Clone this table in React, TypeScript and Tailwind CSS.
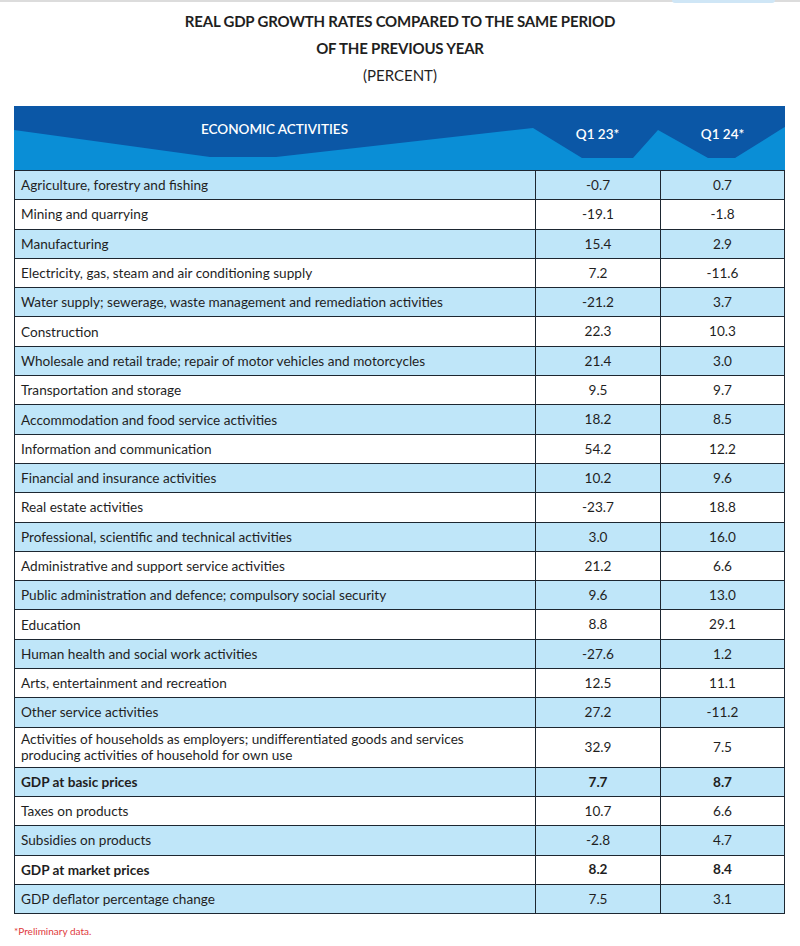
import * as React from "react"

type Row = { label: string; a: string; b: string; bold?: boolean; tall?: boolean }

const rows: Row[] = [
  { label: "Agriculture, forestry and fishing", a: "-0.7", b: "0.7" },
  { label: "Mining and quarrying", a: "-19.1", b: "-1.8" },
  { label: "Manufacturing", a: "15.4", b: "2.9" },
  { label: "Electricity, gas, steam and air conditioning supply", a: "7.2", b: "-11.6" },
  { label: "Water supply; sewerage, waste management and remediation activities", a: "-21.2", b: "3.7" },
  { label: "Construction", a: "22.3", b: "10.3" },
  { label: "Wholesale and retail trade; repair of motor vehicles and motorcycles", a: "21.4", b: "3.0" },
  { label: "Transportation and storage", a: "9.5", b: "9.7" },
  { label: "Accommodation and food service activities", a: "18.2", b: "8.5" },
  { label: "Information and communication", a: "54.2", b: "12.2" },
  { label: "Financial and insurance activities", a: "10.2", b: "9.6" },
  { label: "Real estate activities", a: "-23.7", b: "18.8" },
  { label: "Professional, scientific and technical activities", a: "3.0", b: "16.0" },
  { label: "Administrative and support service activities", a: "21.2", b: "6.6" },
  { label: "Public administration and defence; compulsory social security", a: "9.6", b: "13.0" },
  { label: "Education", a: "8.8", b: "29.1" },
  { label: "Human health and social work activities", a: "-27.6", b: "1.2" },
  { label: "Arts, entertainment and recreation", a: "12.5", b: "11.1" },
  { label: "Other service activities", a: "27.2", b: "-11.2" },
  {
    label: "Activities of households as employers; undifferentiated goods and services producing activities of household for own use",
    a: "32.9",
    b: "7.5",
    tall: true,
  },
  { label: "GDP at basic prices", a: "7.7", b: "8.7", bold: true },
  { label: "Taxes on products", a: "10.7", b: "6.6" },
  { label: "Subsidies on products", a: "-2.8", b: "4.7" },
  { label: "GDP at market prices", a: "8.2", b: "8.4", bold: true },
  { label: "GDP deflator percentage change", a: "7.5", b: "3.1" },
]

const HeaderShape = () => (
  <svg className="absolute inset-0 h-full w-full" viewBox="0 0 771 64" preserveAspectRatio="none">
    <rect x="0" y="0" width="771" height="64" fill="#0b57a6" />
    <polygon
      fill="#0a8ed6"
      points="0,24 196,51 262,51 519,22 568,52 619,52 644,24 694,52 721,52 769,22 771,21 771,64 0,64"
    />
  </svg>
)

export default function App() {
  return (
    <div className="min-h-[946px] w-[800px] bg-white text-[#1f1f1f]" style={{ fontFamily: "Lato, 'Liberation Sans', sans-serif" }}>
      <div className="relative h-[2px] bg-[#dcdcdc]">
        <div className="absolute right-[25px] top-0 h-[3px] w-[103px] rounded-b bg-[#cfe6f6]" />
      </div>

      <div className="flex flex-col items-center pt-[6px] text-center">
        <h1 className="text-[15px] font-bold leading-[27px] tracking-[-0.2px]">
          REAL GDP GROWTH RATES COMPARED TO THE SAME PERIOD
        </h1>
        <h2 className="text-[15px] font-bold leading-[27px] tracking-[-0.2px]">OF THE PREVIOUS YEAR</h2>
        <p className="text-[15px] leading-[27px]">(PERCENT)</p>
      </div>

      <div className="ml-[14px] mt-[17px] w-[771px]">
        <div className="relative grid h-[64px] grid-cols-[521px_125px_125px] text-[13.5px] font-semibold text-white">
          <HeaderShape />
          <div className="relative pt-[13px] text-center">ECONOMIC ACTIVITIES</div>
          <div className="relative pt-[18px] text-center">Q1 23*</div>
          <div className="relative pt-[18px] text-center">Q1 24*</div>
        </div>

        <div className="border-b border-l border-r border-[#1d2731]">
          {rows.map((r, i) => (
            <div
              key={r.label}
              className={`grid grid-cols-[520px_125px_124px] border-t border-[#1d2731] text-[13.6px] ${
                i % 2 === 0 ? "bg-[#bfe6f9]" : "bg-white"
              } ${r.bold ? "font-bold" : ""} ${r.tall ? "h-[40px]" : "h-[29.3px]"}`}
            >
              <div className="flex items-center px-[6px] leading-[16px]">
                <span className={r.tall ? "max-w-[470px]" : ""}>{r.label}</span>
              </div>
              <div className="flex items-center justify-center border-l border-[#1d2731]">{r.a}</div>
              <div className="flex items-center justify-center border-l border-[#1d2731]">{r.b}</div>
            </div>
          ))}
        </div>

        <p className="mt-[10px] text-[10px] text-[#e0393b]">*Preliminary data.</p>
      </div>
    </div>
  )
}
